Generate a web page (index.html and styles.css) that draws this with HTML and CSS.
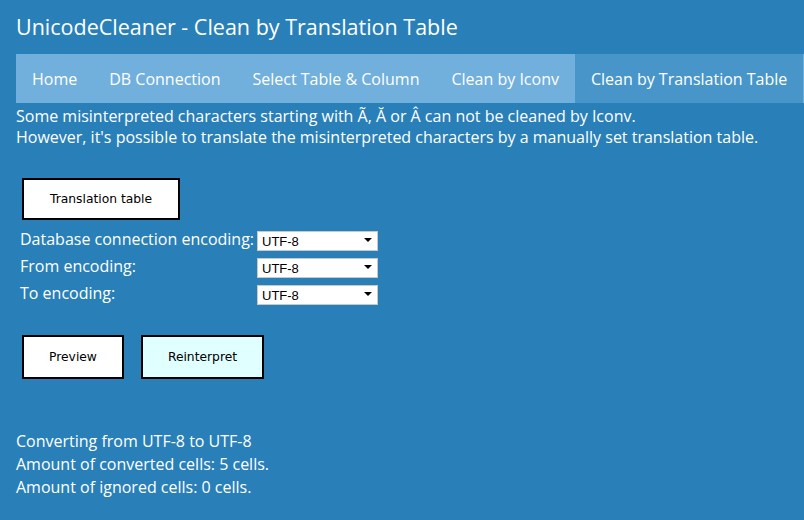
FILE: index.html
```html
<!DOCTYPE html>
<html>
<head>
<meta charset="utf-8">
<link rel="stylesheet" href="styles.css">
</head>
<body>
<header class="title">UnicodeCleaner - Clean by Translation Table</header>
<nav class="nav">
  <a class="nav-item">Home</a>
  <a class="nav-item">DB Connection</a>
  <a class="nav-item">Select Table &amp; Column</a>
  <a class="nav-item">Clean by Iconv</a>
  <a class="nav-item active">Clean by Translation Table</a>
</nav>
<p class="intro">Some misinterpreted characters starting with Ã, Ă or Â can not be cleaned by Iconv.<br>However, it's possible to translate the misinterpreted characters by a manually set translation table.</p>
<div class="btn-row first"><button class="btn wide">Translation table</button></div>
<div class="form">
  <div class="row"><label class="lbl">Database connection encoding:</label><span class="sel"><select><option>UTF-8</option></select></span></div>
  <div class="row"><label class="lbl">From encoding:</label><span class="sel"><select><option>UTF-8</option></select></span></div>
  <div class="row"><label class="lbl">To encoding:</label><span class="sel"><select><option>UTF-8</option></select></span></div>
</div>
<div class="btn-row second">
  <button class="btn preview">Preview</button>
  <button class="btn reint">Reinterpret</button>
</div>
<div class="result">
  <div>Converting from UTF-8 to UTF-8</div>
  <div>Amount of converted cells: 5 cells.</div>
  <div>Amount of ignored cells: 0 cells.</div>
</div>
</body>
</html>
```
FILE: styles.css
```css
html, body {
  margin: 0;
  padding: 0;
  background: #2980b9;
  color: #ffffff;
  font-family: "Open Sans", "Noto Sans", sans-serif;
  overflow: hidden;
}
body {
  padding: 0 0 0 16px;
  width: 788px;
}
.title {
  font-size: 21.5px;
  height: 54px;
  line-height: 54px;
}
.nav {
  display: flex;
  background: #71b0dc;
  height: 49px;
  width: 820px;
  font-size: 16px;
}
.nav-item {
  padding: 1px 16px 0;
  line-height: 48px;
  white-space: nowrap;
}
.nav-item.active {
  background: #4896c9;
}
.intro {
  margin: 3px 0 0 0;
  font-size: 16px;
  line-height: 21px;
}
.btn-row {
  display: flex;
  gap: 17px;
  padding-left: 6px;
}
.btn-row.first { margin-top: 30px; }
.btn-row.second { margin-top: 29px; }
.btn {
  font-family: "DejaVu Sans", sans-serif;
  font-size: 12.3px;
  color: #000;
  background: #fff;
  border: 2px solid #000;
  border-radius: 0;
  height: 42px;
  padding: 0;
}
.btn.wide { width: 158px; }
.btn.preview { width: 102px; height: 44px; }
.btn.reint { width: 123px; height: 44px; background: #e0ffff; }
.form {
  margin-top: 5px;
  padding-left: 4px;
}
.row {
  display: flex;
  align-items: center;
  height: 27px;
}
.lbl {
  width: 237px;
  font-size: 16px;
}
.sel {
  position: relative;
  display: inline-block;
  width: 121px;
  height: 20px;
}
.sel select {
  appearance: none;
  -webkit-appearance: none;
  width: 121px;
  height: 20px;
  border: 1px solid #c8c8c8;
  background: #fff;
  font-family: "Liberation Sans", Arial, sans-serif;
  font-size: 13px;
  color: #000;
  padding: 0 0 0 4px;
  border-radius: 0;
  margin: 0;
}
.sel::after {
  content: "";
  position: absolute;
  right: 6px;
  top: 9px;
  border-left: 4px solid transparent;
  border-right: 4px solid transparent;
  border-top: 4px solid #000;
}
.result {
  margin-top: 51px;
  font-size: 16px;
  line-height: 23px;
}
```
